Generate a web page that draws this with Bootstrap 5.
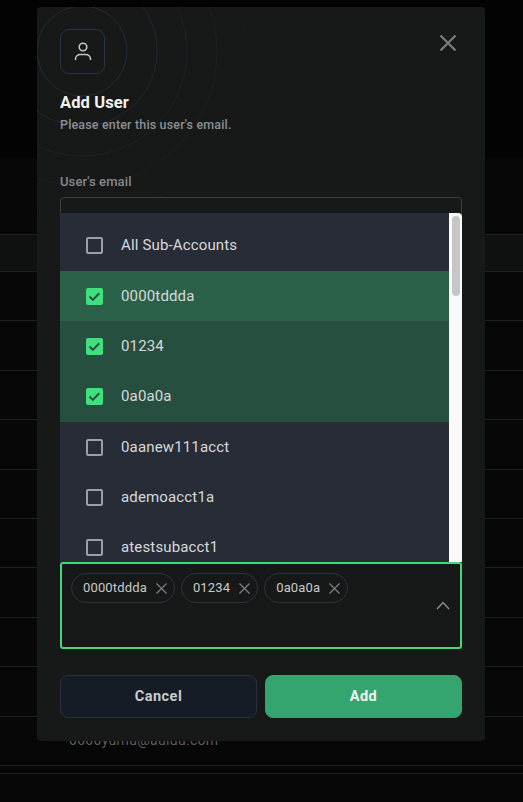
<!DOCTYPE html>
<html lang="en">
<head>
  <meta charset="UTF-8" />
  <meta name="viewport" content="width=device-width, initial-scale=1.0"/>
  <title>Add User</title>
  <link href="https://cdn.jsdelivr.net/npm/bootstrap@5.3.2/dist/css/bootstrap.min.css" rel="stylesheet">
  <style>
    html, body { height: 100%; }
    body {
      background-color: #070707;
      font-family: Roboto, "Liberation Sans", sans-serif;
      overflow: hidden;
    }
    .page-top { height: 158px; background-color: #030303; }
    .page-head { height: 76px; }
    .page-row {
      height: 49.4px;
      border-top: 1px solid #1f2020;
      padding-left: 69px;
      color: #5c5d5e;
      font-size: 14px;
      letter-spacing: .3px;
    }
    .page-row.short { height: 8px; }
    .page-row.band { height: 37px; background-color: #0f1110; }

    .user-dialog {
      position: absolute;
      left: 37px;
      top: 7px;
      width: 448px;
      height: 734px;
      padding: 22px 23px 23px;
      background-color: #171918;
      border-radius: 4px;
      overflow: hidden;
    }
    .rings { position: absolute; left: 0; top: 0; }
    .dialog-body { position: relative; }
    .icon-box {
      width: 45px;
      height: 45px;
      border: 1px solid #2a3341;
      border-radius: 9px;
      background-color: #171918;
    }
    .close-x { position: absolute; right: 5px; top: 5px; background: none; border: 0; padding: 0; line-height: 0; }
    .dialog-title { font-size: 16.5px; font-weight: 700; color: #f2f2f2; line-height: 20px; margin: 19px 0 0; letter-spacing: .1px; }
    .dialog-sub { font-size: 12.5px; font-weight: 500; color: #8b8f96; line-height: 18px; margin: 3px 0 0; letter-spacing: .16px; }
    .email-label { font-size: 13px; font-weight: 500; color: #85888c; line-height: 16px; margin: 0 0 7px; letter-spacing: .1px; }
    .email-input, .email-input:focus {
      height: 40px;
      background-color: #171918;
      border: 1px solid #3c3e3f;
      border-radius: 4px;
      box-shadow: none;
    }
    .email-block { margin-top: 40px; }

    .picker-wrap { position: relative; }
    .picker-menu {
      position: absolute;
      left: 0;
      right: 0;
      bottom: 100%;
      height: 349px;
      overflow: hidden;
      border-radius: 0 4px 0 0;
    }
    .picker-list { flex: 1 1 auto; min-width: 0; background-color: #282c36; border-radius: 0; }
    .picker-item {
      height: 50.3px;
      padding: 0 0 0 26px;
      gap: 18px;
      background-color: #282c36;
      border: 0;
      color: #d8d9dc;
      font-size: 15px;
      letter-spacing: .15px;
      flex-shrink: 0;
    }
    .picker-item.first { height: 58px; padding-top: 7px; }
    .picker-item.sel { background-color: #264f40; }
    .picker-item.hov { background-color: #2a6148; }
    .picker-check {
      width: 17px;
      height: 17px;
      flex-shrink: 0;
      border: 2px solid #9d9fa8;
      border-radius: 2px;
    }
    .picker-check.on { background-color: #41e07f; border-color: #41e07f; }
    .scroll-track { width: 13px; flex-shrink: 0; background-color: #fafafa; padding: 3px 2px 0 3px; }
    .scroll-thumb { height: 80px; background-color: #c6c6c6; border-radius: 4px; }

    .picker-box {
      height: 87px;
      padding: 9px 9px;
      gap: 6px;
      border: 2px solid #41d97b;
      border-radius: 3px;
      background-color: #171918;
    }
    .sub-chip {
      height: 30px;
      padding: 0 7px 0 11px;
      gap: 9px;
      border: 1px solid #2c3440;
      border-radius: 15px;
      color: #c9cacc;
      font-size: 13px;
      letter-spacing: .15px;
    }
    .chevron-up { position: absolute; right: 12px; top: 39px; line-height: 0; }

    .dialog-btn {
      flex: 1 1 0;
      height: 43px;
      border-radius: 8px;
      font-size: 14.5px;
      font-weight: 700;
      letter-spacing: .5px;
      padding: 0;
    }
    .btn-cancel, .btn-cancel:hover { background-color: #151c26; border: 1px solid #2a303a; color: #c9cbce; }
    .btn-add, .btn-add:hover { background-color: #34a56f; border: 1px solid #34a56f; color: #f0f5f2; }
    .dialog-foot { margin-top: 26px; }
  </style>
</head>
<body>

<div class="page-top"></div>
<div class="page-head"></div>
<div class="page-row band"></div>
<div class="page-row"></div>
<div class="page-row"></div>
<div class="page-row"></div>
<div class="page-row"></div>
<div class="page-row"></div>
<div class="page-row"></div>
<div class="page-row"></div>
<div class="page-row"></div>
<div class="page-row"></div>
<div class="page-row d-flex align-items-center">0000yumu@auidu.com</div>
<div class="page-row short"></div>
<div class="page-row short"></div>

<div class="user-dialog d-flex flex-column">
  <svg class="rings" width="448" height="300" viewBox="0 0 448 300" fill="none">
    <circle cx="45" cy="44" r="45" stroke="#232c38"/>
    <circle cx="45" cy="44" r="75" stroke="#212831"/>
    <circle cx="45" cy="44" r="105" stroke="#1f242a"/>
    <circle cx="45" cy="44" r="135" stroke="#1c2024"/>
    <circle cx="45" cy="44" r="165" stroke="#1a1c1e"/>
  </svg>

  <div class="dialog-body">
    <div class="icon-box d-flex align-items-center justify-content-center">
      <svg width="18" height="20" viewBox="0 0 18 20" fill="none" stroke="#c4c5c7" stroke-width="1.600">
        <circle cx="9" cy="5" r="3.800"/>
        <path d="M1.500 18v-1c0-2.600 2.200-4.500 5-4.500h5c2.800 0 5 1.900 5 4.500v1"/>
      </svg>
    </div>
    <button type="button" class="close-x" aria-label="Close">
      <svg width="18" height="18" viewBox="0 0 18 18" stroke="#77797b" stroke-width="2.400" fill="none">
        <path d="M1.500 1.500l15 15M16.500 1.500l-15 15"/>
      </svg>
    </button>
    <h5 class="dialog-title">Add User</h5>
    <p class="dialog-sub">Please enter this user's email.</p>
  </div>

  <div class="dialog-body email-block">
    <label class="email-label d-block" for="userEmail">User's email</label>
    <input id="userEmail" type="email" class="form-control email-input">
  </div>

  <div class="picker-wrap mt-auto">
    <div class="picker-menu d-flex">
      <div class="list-group picker-list">
        <div class="list-group-item d-flex align-items-center picker-item first"><span class="picker-check"></span>All Sub-Accounts</div>
        <div class="list-group-item d-flex align-items-center picker-item hov">
          <span class="picker-check on d-flex align-items-center justify-content-center">
            <svg width="13" height="13" viewBox="0 0 13 13" fill="none" stroke="#264f40" stroke-width="2"><path d="M1.500 6.500l3.400 3.400 6.300-6.600"/></svg>
          </span>0000tddda</div>
        <div class="list-group-item d-flex align-items-center picker-item sel">
          <span class="picker-check on d-flex align-items-center justify-content-center">
            <svg width="13" height="13" viewBox="0 0 13 13" fill="none" stroke="#264f40" stroke-width="2"><path d="M1.500 6.500l3.400 3.400 6.300-6.600"/></svg>
          </span>01234</div>
        <div class="list-group-item d-flex align-items-center picker-item sel">
          <span class="picker-check on d-flex align-items-center justify-content-center">
            <svg width="13" height="13" viewBox="0 0 13 13" fill="none" stroke="#264f40" stroke-width="2"><path d="M1.500 6.500l3.400 3.400 6.300-6.600"/></svg>
          </span>0a0a0a</div>
        <div class="list-group-item d-flex align-items-center picker-item"><span class="picker-check"></span>0aanew111acct</div>
        <div class="list-group-item d-flex align-items-center picker-item"><span class="picker-check"></span>ademoacct1a</div>
        <div class="list-group-item d-flex align-items-center picker-item"><span class="picker-check"></span>atestsubacct1</div>
      </div>
      <div class="scroll-track"><div class="scroll-thumb"></div></div>
    </div>

    <div class="picker-box d-flex align-items-start">
      <span class="sub-chip d-inline-flex align-items-center">0000tddda
        <svg width="11" height="11" viewBox="0 0 11 11" stroke="#7b7e83" stroke-width="1.300"><path d="M.5.5l10 10M10.500.5l-10 10"/></svg>
      </span>
      <span class="sub-chip d-inline-flex align-items-center">01234
        <svg width="11" height="11" viewBox="0 0 11 11" stroke="#7b7e83" stroke-width="1.300"><path d="M.5.5l10 10M10.500.5l-10 10"/></svg>
      </span>
      <span class="sub-chip d-inline-flex align-items-center">0a0a0a
        <svg width="11" height="11" viewBox="0 0 11 11" stroke="#7b7e83" stroke-width="1.300"><path d="M.5.5l10 10M10.500.5l-10 10"/></svg>
      </span>
      <span class="chevron-up">
        <svg width="14" height="9" viewBox="0 0 14 9" fill="none" stroke="#8a8c8f" stroke-width="1.500"><path d="M1 8l6-6.500L13 8"/></svg>
      </span>
    </div>
  </div>

  <div class="d-flex gap-2 dialog-body dialog-foot">
    <button type="button" class="btn dialog-btn btn-cancel">Cancel</button>
    <button type="button" class="btn dialog-btn btn-add">Add</button>
  </div>
</div>

<script src="https://cdn.jsdelivr.net/npm/bootstrap@5.3.2/dist/js/bootstrap.bundle.min.js"></script>
</body>
</html>
